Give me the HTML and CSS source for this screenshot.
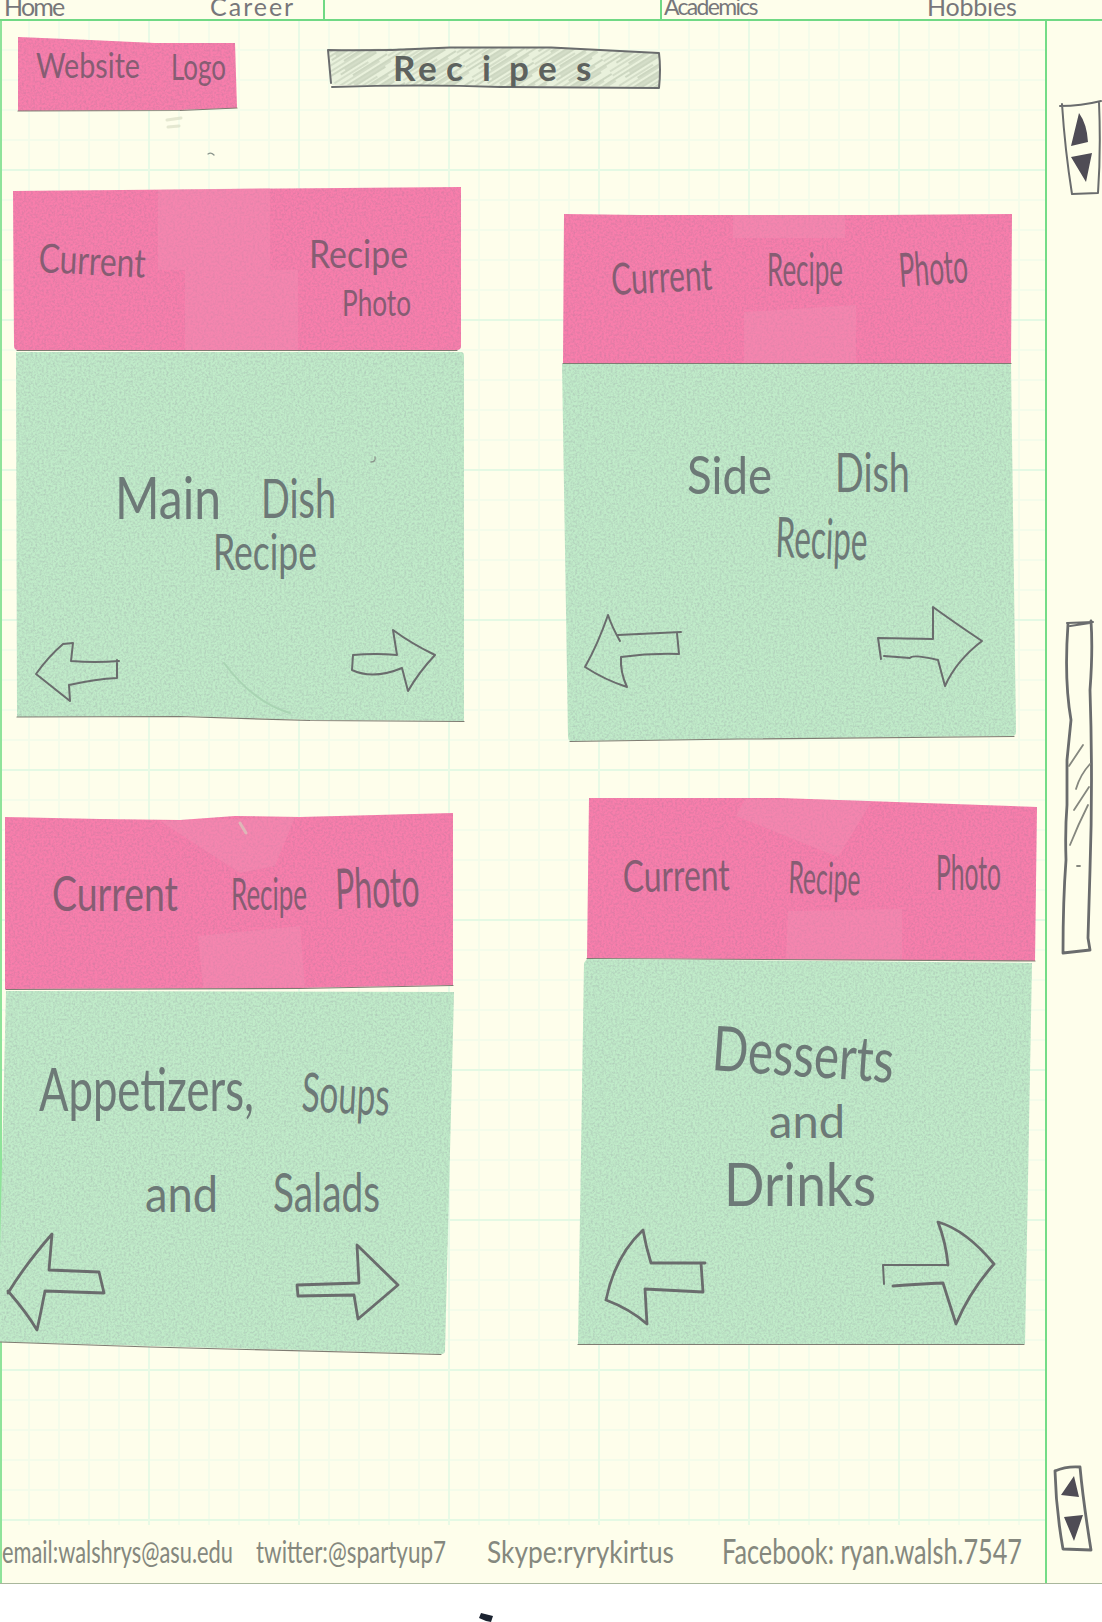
FILE: index.html
```html
<!DOCTYPE html>
<html lang="en">
<head>
<meta charset="utf-8">
<title>Recipes</title>
<link rel="stylesheet" href="styles.css">
</head>
<body>
<svg class="defs" width="0" height="0" aria-hidden="true">
  <defs>
    <filter id="grain" x="0" y="0" width="100%" height="100%" color-interpolation-filters="sRGB">
      <feTurbulence type="fractalNoise" baseFrequency="0.45" numOctaves="2" seed="4"/>
      <feColorMatrix values="0 0 0 0 0.5  0 0 0 0 0.45  0 0 0 0 0.55  0.5 0 0 0 -0.19" result="n"/>
      <feComposite in="n" in2="SourceGraphic" operator="in" result="m"/>
      <feMerge><feMergeNode in="SourceGraphic"/><feMergeNode in="m"/></feMerge>
    </filter>
    <pattern id="hatch" width="17" height="60" patternUnits="userSpaceOnUse" patternTransform="rotate(58)">
      <path d="M1 0V60M5 8V50M12 0V40" stroke="#97a58f" stroke-width="1" opacity=".7"/>
      <path d="M3 0V44M9 20V60M14 10V60" stroke="#b3bfa8" stroke-width="1.3" opacity=".6"/>
    </pattern>
  </defs>
</svg>
<div class="sheet">
  <div class="page">
    <nav class="nav">
      <a class="home">Home</a>
      <a class="career">Career</a>
      <a class="academics">Academics</a>
      <a class="hobbies">Hobbies</a>
    </nav>
    <header class="masthead">
      <svg class="logo" viewBox="0 20 324 160">
        <path class="pink" d="M18 36L90 39 155 42H235L237 107 180 109 18 110Z"/>
        <path class="edge" d="M18 110L180 109.500 237 107"/>
        <text x="36" y="77" font-size="34" textLength="104" lengthAdjust="spacingAndGlyphs">Website</text>
        <text x="171" y="79" font-size="37" textLength="55" lengthAdjust="spacingAndGlyphs">Logo</text>
        <path class="smudge" d="M167 119l14-2M168 126l11-1"/>
        <path class="fleck" d="M208 153q3-2 6 1"/>
      </svg>
      <svg class="title" viewBox="324 20 722 160">
        <path class="wash" d="M329 49L450 46H551L659 52V86L500 85 332 84Z"/>
        <path class="hatch" d="M329 49L450 46H551L659 52V86L500 85 332 84Z"/>
        <path class="pencil" d="M331 82L328 49Q390 50 450 46.500H551L659 52Q661 68 659 87L500 86Q420 83 332 86"/>
        <text class="bold" x="393 418 446 482 509 538 576" y="80" font-size="35">Recipes</text>
      </svg>
    </header>
    <main class="board">
      <div class="column left">
        <article class="card main-dish">
          <svg class="photo" viewBox="0 180 500 169">
            <path class="pink" d="M13 190L461 186V345Q461 349 457 349H18Q14 349 14 345Z"/>
            <path class="tape" d="M158 189L270 187V269H158ZM185 269H298V349H185Z"/>
            <path class="edge" d="M17 349.500H457"/>
            <text x="38" y="271" font-size="40" textLength="107" lengthAdjust="spacingAndGlyphs" transform="rotate(3 38 271)">Current</text>
            <text x="309" y="267" font-size="38" textLength="99" lengthAdjust="spacingAndGlyphs">Recipe</text>
            <text x="342" y="315" font-size="37" textLength="69" lengthAdjust="spacingAndGlyphs">Photo</text>
          </svg>
          <svg class="recipe" viewBox="0 349 500 376">
            <path class="green" d="M16 351H461Q464 351 464 355V720L310 719 180 715 17 716Z"/>
            <path class="edge" d="M17 716L180 715.500 310 719.500 464 720.500"/>
            <path class="crease" d="M224 662Q254 702 290 712"/>
            <path class="fleck" d="M371 461q5 0 4-5"/>
            <text x="115" y="518" font-size="58" textLength="106" lengthAdjust="spacingAndGlyphs">Main</text>
            <text x="261" y="517" font-size="55" textLength="75" lengthAdjust="spacingAndGlyphs">Dish</text>
            <text x="213" y="569" font-size="50" textLength="104" lengthAdjust="spacingAndGlyphs">Recipe</text>
            <path class="pencil" d="M36 673Q48 656 63 643L73 642 71 660Q95 662 119 660M117 659V677Q96 678 69 684L70 700Q55 688 36 673"/>
            <path class="pencil" d="M353 654Q375 652 397 654L393 629Q412 643 435 654Q419 671 408 690L402 667Q373 679 352 669Z"/>
          </svg>
        </article>
        <article class="card appetizers">
          <svg class="photo" viewBox="0 800 500 189">
            <path class="pink" d="M5 816L100 818 180 819 235 815 300 816 453 812V984L300 987 5 988Z"/>
            <path class="tape" d="M160 820L295 816 275 865 240 872ZM198 935L300 925 305 986 203 987Z"/>
            <path class="edge" d="M6 988.500L300 987.500 453 984.500"/>
            <path class="smudge" d="M240 822l6 10"/>
            <text x="52" y="910" font-size="48" textLength="126" lengthAdjust="spacingAndGlyphs">Current</text>
            <text x="231" y="909" font-size="44" textLength="76" lengthAdjust="spacingAndGlyphs">Recipe</text>
            <text x="336" y="908" font-size="56" textLength="84" lengthAdjust="spacingAndGlyphs" transform="rotate(-2 336 908)">Photo</text>
          </svg>
          <svg class="recipe" viewBox="0 989 500 371">
            <path class="green" d="M6 990L454 991 445 1350Q445 1353 441 1353L150 1345 0 1341V1250Z"/>
            <path class="edge" d="M0 1341L150 1346 441 1353.500"/>
            <text x="39" y="1110" font-size="60" textLength="215" lengthAdjust="spacingAndGlyphs">Appetizers,</text>
            <text x="301" y="1110" font-size="54" textLength="88" lengthAdjust="spacingAndGlyphs" transform="rotate(3 301 1110)">Soups</text>
            <text x="145" y="1211" font-size="50" textLength="73" lengthAdjust="spacingAndGlyphs">and</text>
            <text x="273" y="1211" font-size="54" textLength="107" lengthAdjust="spacingAndGlyphs">Salads</text>
            <path class="pencil thick" d="M8 1292Q25 1264 52 1233L49 1269 99 1271 104 1292 45 1290Q41 1311 37 1329Q27 1312 8 1290"/>
            <path class="pencil thick" d="M297 1284L359 1282 357 1244 398 1284 358 1318 354 1294 298 1295Z"/>
          </svg>
        </article>
      </div>
      <div class="column right">
        <article class="card side-dish">
          <svg class="photo" viewBox="500 200 546 163">
            <path class="pink" d="M564 213L640 214 880 214 1012 213 1011 362H563Z"/>
            <path class="tape" d="M733 214H845V237H733ZM744 311L856 304V362H744Z"/>
            <path class="edge" d="M563 362.500H1011"/>
            <text x="612" y="294" font-size="44" textLength="101" lengthAdjust="spacingAndGlyphs" transform="rotate(-3 612 294)">Current</text>
            <text x="767" y="285" font-size="46" textLength="76" lengthAdjust="spacingAndGlyphs">Recipe</text>
            <text x="900" y="286" font-size="47" textLength="69" lengthAdjust="spacingAndGlyphs" transform="rotate(-4 900 286)">Photo</text>
          </svg>
          <svg class="recipe" viewBox="500 363 546 382">
            <path class="green" d="M562 363H1011L1016 731Q1016 735 1012 735L571 740Q568 740 568 735Z"/>
            <path class="edge" d="M570 740.500L740 738 1014 735.500"/>
            <text x="687" y="493" font-size="52" textLength="85" lengthAdjust="spacingAndGlyphs">Side</text>
            <text x="835" y="491" font-size="54" textLength="75" lengthAdjust="spacingAndGlyphs">Dish</text>
            <text x="775" y="556" font-size="56" textLength="92" lengthAdjust="spacingAndGlyphs" transform="rotate(2 775 556)">Recipe</text>
            <path class="pencil" d="M585 666Q598 643 608 614Q612 626 620 640M618 634L681 631M677 632L679 653Q650 652 621 656Q620 671 627 686Q605 679 585 666"/>
            <path class="pencil" d="M881 658L878 637 933 638V606Q955 622 982 640Q956 660 945 685L938 659Q913 653 910 657L884 655"/>
          </svg>
        </article>
        <article class="card desserts">
          <svg class="photo" viewBox="500 785 546 173">
            <path class="pink" d="M589 797L780 797 1037 806 1035 960 587 957Z"/>
            <path class="tape" d="M745 798L872 800 838 856 736 815ZM788 910L902 908V959H786Z"/>
            <path class="edge" d="M587 957.500L1035 960"/>
            <text x="623" y="891" font-size="44" textLength="107" lengthAdjust="spacingAndGlyphs" transform="rotate(-1 623 891)">Current</text>
            <text x="788" y="892" font-size="45" textLength="72" lengthAdjust="spacingAndGlyphs" transform="rotate(2 788 892)">Recipe</text>
            <text x="936" y="889" font-size="48" textLength="65" lengthAdjust="spacingAndGlyphs">Photo</text>
          </svg>
          <svg class="recipe" viewBox="500 958 546 392">
            <path class="green" d="M587 958L1032 962 1025 1343H578L584 962Z"/>
            <path class="edge" d="M578 1343.500H1024"/>
            <text x="711" y="1069" font-size="62" textLength="182" lengthAdjust="spacingAndGlyphs" transform="rotate(4 711 1069)">Desserts</text>
            <text x="769" y="1137" font-size="46" textLength="76" lengthAdjust="spacingAndGlyphs">and</text>
            <text x="724" y="1205" font-size="60" textLength="152" lengthAdjust="spacingAndGlyphs">Drinks</text>
            <path class="pencil thick" d="M606 1299Q615 1255 643 1229Q646 1246 651 1262H705M701 1262L703 1291 645 1288 647 1323Q630 1308 606 1299"/>
            <path class="pencil" d="M884 1283L883 1264 948 1264"/>
            <path class="pencil thick" d="M948 1264Q946 1242 938 1221Q966 1229 994 1263Q970 1290 956 1323L943 1282Q920 1283 893 1285"/>
          </svg>
        </article>
      </div>
    </main>
    <footer class="footer">
      <svg class="contacts" viewBox="0 1524 1046 60">
        <text x="2" y="1561" font-size="31" textLength="231" lengthAdjust="spacingAndGlyphs">email:walshrys@asu.edu</text>
        <text x="256" y="1561" font-size="31" textLength="190" lengthAdjust="spacingAndGlyphs">twitter:@spartyup7</text>
        <text x="487" y="1561" font-size="31" textLength="187" lengthAdjust="spacingAndGlyphs">Skype:ryrykirtus</text>
        <text x="722" y="1562" font-size="34" textLength="300" lengthAdjust="spacingAndGlyphs">Facebook: ryan.walsh.7547</text>
      </svg>
    </footer>
  </div>
  <aside class="rail">
    <svg class="stepper" viewBox="1047 95 55 105">
      <path class="pencil" d="M1060 106Q1081 106 1101 101M1062 104Q1065 150 1072 194L1098 193Q1101 150 1099 102"/>
      <path class="ink" d="M1079 113Q1087 124 1088 142L1071 146ZM1071 157L1092 153 1086 182Z"/>
    </svg>
    <svg class="thumb" viewBox="1047 615 55 345">
      <path class="pencil" d="M1067 623L1093 622M1070 626L1090 623"/>
      <path class="pencil thick" d="M1091 621Q1093 650 1090 690Q1093 780 1090 870L1088 938 1090 950 1063 953Q1063 900 1066 860Q1065 830 1067 805V760L1071 720Q1064 680 1068 624"/>
      <path class="stroke" d="M1083 745L1069 766M1090 764Q1080 775 1076 789M1089 787L1074 810M1088 805Q1078 825 1070 845M1077 866h3"/>
    </svg>
    <svg class="stepper" viewBox="1047 1460 55 95">
      <path class="pencil thick" d="M1055 1471Q1066 1466 1080 1467Q1083 1500 1091 1550L1063 1549Q1056 1510 1055 1471"/>
      <path class="ink" d="M1074 1476L1079 1497 1061 1495ZM1064 1517L1083 1515 1074 1541Z"/>
    </svg>
  </aside>
</div>
<div class="scanner">
  <svg class="blot" viewBox="0 0 14 9"><path d="M2 0L14 3 12 9 7 8 0 5Z"/></svg>
</div>
</body>
</html>
```
FILE: styles.css
```css
* { box-sizing: border-box; }

body {
  margin: 0;
  width: 1102px;
  height: 1622px;
  overflow: hidden;
  background: #fff;
  color: #77777a;
  font-family: Lato, "Liberation Sans", sans-serif;
}

.defs { position: absolute; }

svg { display: block; overflow: visible; }

.sheet {
  display: grid;
  grid-template-columns: 1047px 55px;
  grid-template-rows: 1583px;
  height: 1584px;
  background: #fefeeb;
  border-bottom: 1px solid #a9b79c;
}

.page {
  display: flex;
  flex-direction: column;
  border-left: 2px solid #8fe39a;
  border-right: 2px solid #74dc86;
  background:
    linear-gradient(#fefeeb, #fefeeb) 0 1525px / 100% 60px no-repeat,
    repeating-linear-gradient(90deg, transparent 0 146px, #e8fae6 146px 148px, transparent 148px 150px),
    repeating-linear-gradient(transparent 0 19px, #e4f9e4 19px 21px, transparent 21px 150px),
    repeating-linear-gradient(90deg, transparent 0 26px, #f4fcea 26px 28px, transparent 28px 30px),
    repeating-linear-gradient(transparent 0 19px, #f4fcea 19px 21px, transparent 21px 30px);
}

.page > * { margin-left: -2px; }

.nav {
  display: flex;
  flex: 0 0 21px;
  width: 1102px;
  background: #fefeeb;
  border-bottom: 2px solid #70d984;
  font-size: 25px;
  line-height: 13px;
  white-space: nowrap;
}

.nav a { flex: none; }
.home { width: 208px; padding-left: 4px; letter-spacing: -1.8px; }
.career { width: 117px; padding-left: 2px; border-right: 2px solid #70d984; letter-spacing: 2px; }
.academics { width: 267px; margin-left: 335px; padding-left: 2px; border-left: 2px solid #70d984; font-size: 23px; letter-spacing: -1.7px; }
.hobbies { letter-spacing: -0.2px; }

.masthead { display: flex; flex: 0 0 158px; }
.logo { width: 324px; height: 160px; }
.title { width: 722px; height: 160px; }

.board { display: flex; flex: 0 0 1345px; }
.column { display: flex; flex-direction: column; }
.left { width: 500px; gap: 75px; }
.right { width: 546px; padding-top: 20px; gap: 40px; }
.left svg { width: 500px; }
.right svg { width: 546px; }

.main-dish .photo { height: 169px; }
.main-dish .recipe { height: 376px; }
.appetizers .photo { height: 189px; }
.appetizers .recipe { height: 371px; }
.side-dish .photo { height: 163px; }
.side-dish .recipe { height: 382px; }
.desserts .photo { height: 173px; }
.desserts .recipe { height: 392px; }

.footer { flex: 0 0 59px; }
.contacts { width: 1046px; height: 60px; }

.rail { display: flex; flex-direction: column; padding-top: 95px; }
.rail svg { flex: none; width: 55px; }
.stepper:first-child { height: 105px; }
.thumb { height: 345px; margin-top: 415px; }
.stepper:last-child { height: 95px; margin-top: 500px; }

.photo text, .logo text { fill: #865d73; }
.recipe text { fill: #6d7977; }
.contacts text { fill: #85887e; }
.title .bold { fill: #5d625e; font-weight: 700; }

.pink { fill: #f87eac; filter: url(#grain); }
.green { fill: #c0ebc9; filter: url(#grain); }
.tape { fill: #ef90b4; opacity: 0.4; }
.wash { fill: #e9f1dc; }
.hatch { fill: url(#hatch); }
.ink { fill: #4f4c55; }

.edge, .pencil, .stroke, .smudge, .crease, .fleck { fill: none; stroke-linecap: round; stroke-linejoin: round; }
.edge { stroke: #7f7c72; stroke-width: 1.2; }
.pencil { stroke: #6a6c6d; stroke-width: 2; }
.thick { stroke-width: 2.8; }
.stroke { stroke: #85877f; stroke-width: 1.8; }
.smudge { stroke: #d3d8bf; stroke-width: 3; opacity: 0.6; }
.crease { stroke: #a9d4b3; stroke-width: 2; }
.fleck { stroke: #8b958c; stroke-width: 1.3; }

.scanner { height: 38px; padding: 29px 0 0 479px; }
.blot { width: 14px; height: 9px; fill: #1b2330; }
```
